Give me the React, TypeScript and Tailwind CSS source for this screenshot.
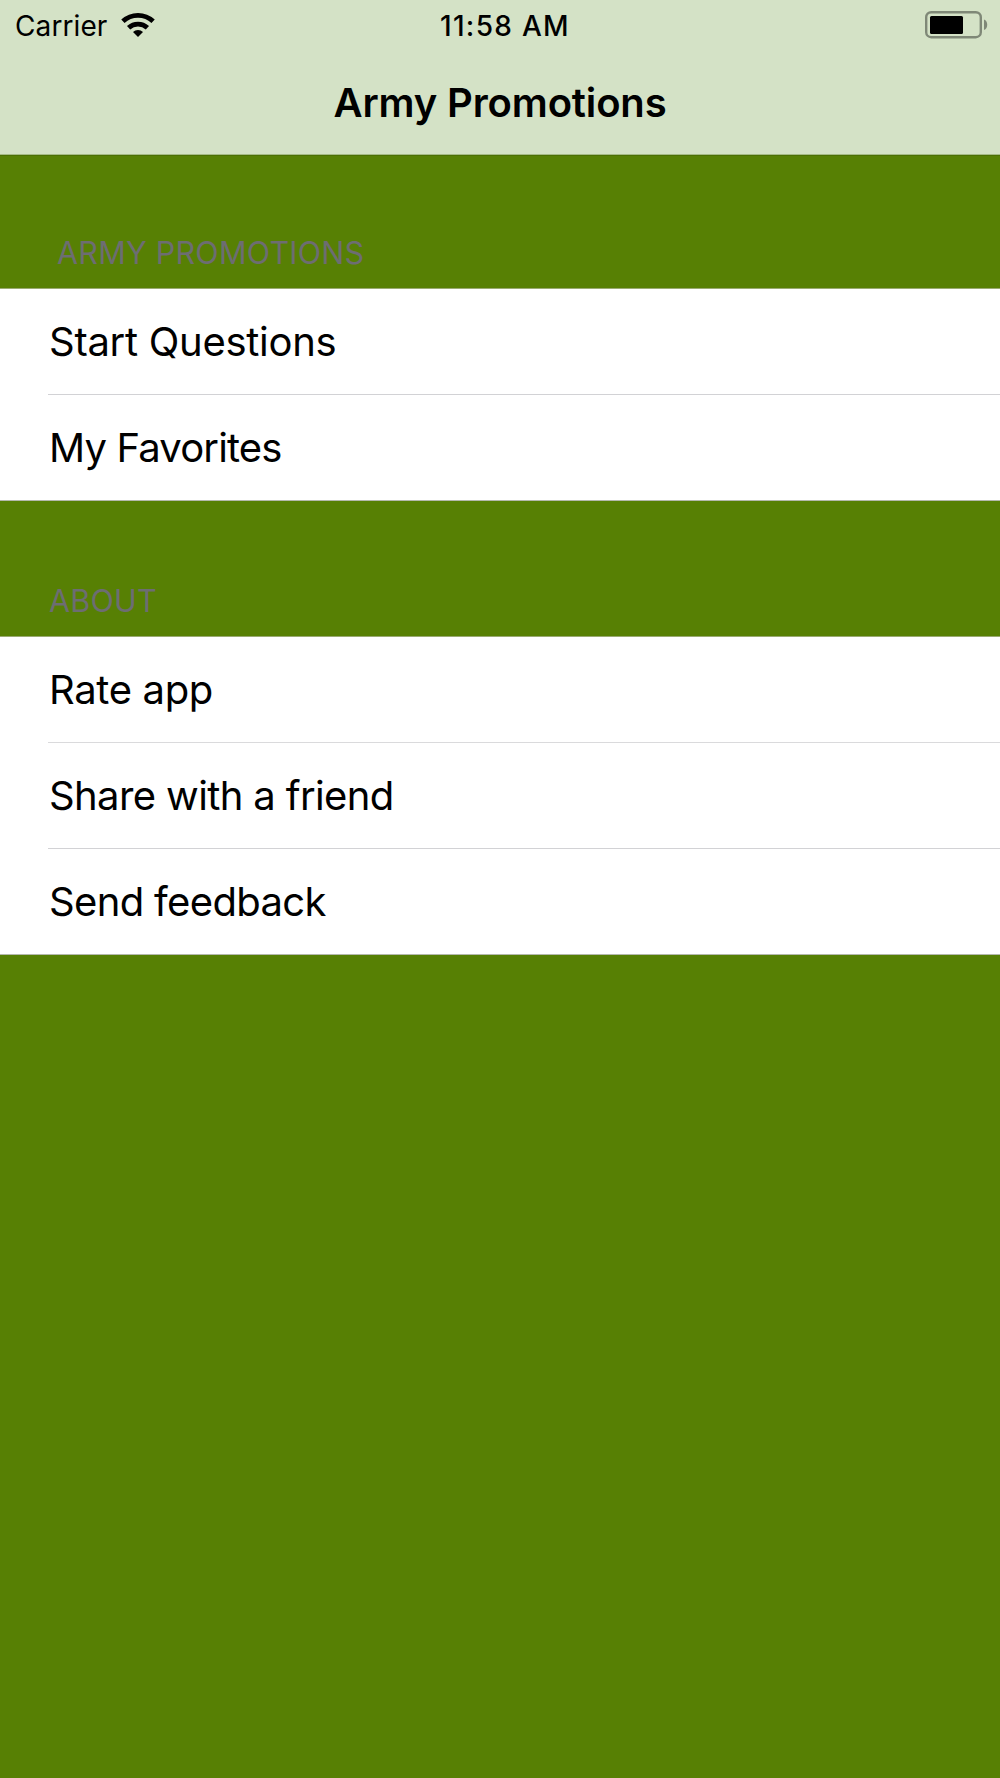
interface Row {
  label: string;
  className: string;
}

interface Section {
  title: string;
  headerClass: string;
  rows: Row[];
}

const sections: Section[] = [
  {
    title: 'ARMY PROMOTIONS',
    headerClass: 'h-[132px] pl-[57px] pt-[78px]',
    rows: [
      { label: 'Start Questions', className: 'tracking-[-0.28px] border-[#d2d2d5]' },
      { label: 'My Favorites', className: 'tracking-[-0.85px] border-transparent' },
    ],
  },
  {
    title: 'ABOUT',
    headerClass: 'h-[135px] pl-[49px] pt-[81px]',
    rows: [
      { label: 'Rate app', className: 'tracking-[-0.35px] border-[#dadadc]' },
      { label: 'Share with a friend', className: 'tracking-[-0.62px] border-[#d2d2d5]' },
      { label: 'Send feedback', className: 'tracking-[-0.65px] border-transparent' },
    ],
  },
];

function WifiIcon() {
  return (
    <svg width="34" height="26" viewBox="0 0 34 26" fill="none" stroke="black" strokeWidth="4.8">
      <path d="M1.9 9.3a22 22 0 0 1 30.2 0" />
      <path d="M7.6 15.7a13.9 13.9 0 0 1 18.8 0" />
      <path d="M17 25l-5-5.1a7.2 7.2 0 0 1 10 0z" fill="black" stroke="none" />
    </svg>
  );
}

function BatteryIcon() {
  return (
    <svg width="63" height="28" viewBox="0 0 63 28" fill="none">
      <rect x="1.2" y="1.2" width="54.6" height="25" rx="5" stroke="#7f8877" strokeWidth="2.4" />
      <rect x="5" y="5" width="33" height="18" rx="1.5" fill="black" />
      <path d="M59 8.5c4.3 1.5 4.3 9 0 10.5z" fill="#7f8877" />
    </svg>
  );
}

function StatusBar() {
  return (
    <div className="grid h-[50px] grid-cols-3 items-center pl-[15px] pr-3 text-[28px] leading-none">
      <div className="flex items-center gap-3.5">
        <span className="pt-px tracking-[0.1px]">Carrier</span>
        <WifiIcon />
      </div>
      <span className="pl-[7px] pt-px text-center font-medium tracking-[1.3px]">11:58 AM</span>
      <div className="flex justify-end">
        <BatteryIcon />
      </div>
    </div>
  );
}

export default function App() {
  return (
    <div className="min-h-[1778px] w-[1000px] overflow-hidden bg-[#578004] font-['Inter',sans-serif] text-black">
      <header className="h-[155px] border-b border-[#a5ba85] bg-[#d4e2c6]">
        <StatusBar />
        <h1 className="pt-8 text-center text-[40px] font-semibold leading-[42px] tracking-[-0.15px]">Army Promotions</h1>
      </header>
      {/* shadow of the translucent bar */}
      <div className="h-px bg-[#4b6f03]" />
      {sections.map((section) => (
        <section key={section.title}>
          <h2 className={`text-[30.5px] leading-[38px] tracking-[0.25px] text-[#6d6d72] ${section.headerClass}`}>
            {section.title}
          </h2>
          <ul className="border-y border-t-[#9aaa72] border-b-[#b5b9ad] bg-white">
            {section.rows.map((row) => (
              <li
                key={row.label}
                className={`ml-[48px] flex h-[106px] items-center border-b pl-px text-[40px] last:h-[105px] last:border-b-0 last:pt-px ${row.className}`}
              >
                {row.label}
              </li>
            ))}
          </ul>
        </section>
      ))}
    </div>
  );
}
